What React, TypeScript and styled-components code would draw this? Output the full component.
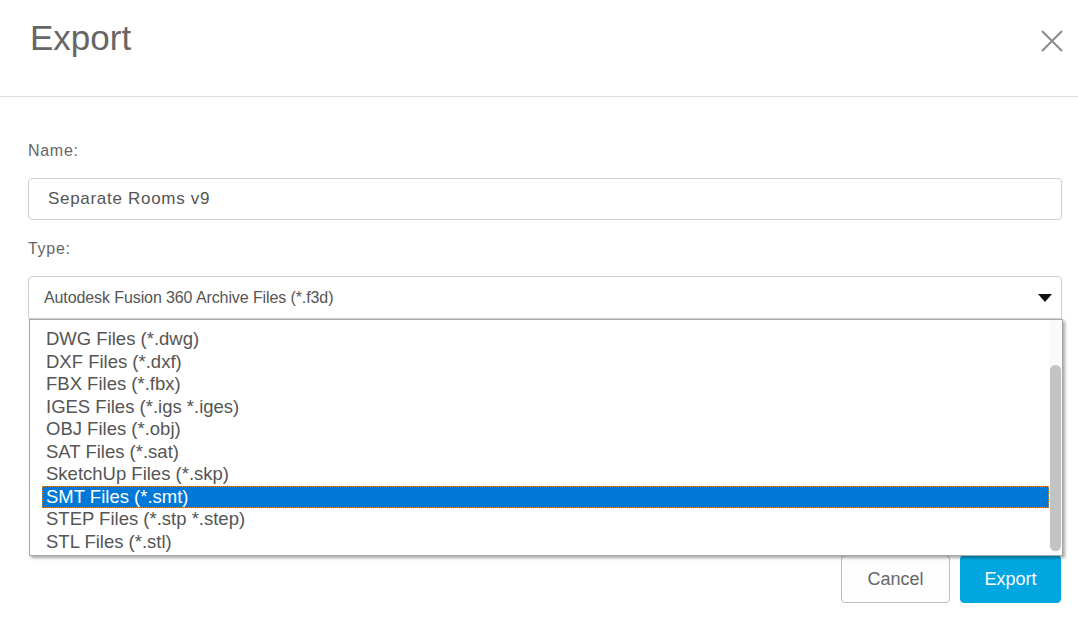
import styled, { createGlobalStyle } from 'styled-components';

const GlobalStyle = createGlobalStyle`
  html, body {
    margin: 0;
    background: #fff;
    font-family: 'Liberation Sans', Arial, sans-serif;
  }
  * {
    box-sizing: border-box;
  }
`;

const Dialog = styled.div`
  width: 1078px;
  height: 624px;
  background: #fff;
  overflow: hidden;
`;

const Header = styled.header`
  display: flex;
  justify-content: space-between;
  align-items: flex-start;
  height: 97px;
  padding: 20px 15px 0 30px;
  border-bottom: 1px solid #dcdcdc;
`;

const Title = styled.h1`
  margin: 0;
  font-size: 35px;
  line-height: 36px;
  font-weight: 400;
  color: #666;
`;

const Close = styled.button`
  display: flex;
  margin-top: 10px;
  padding: 0;
  border: 0;
  background: none;
  color: #8a8a8a;
  cursor: pointer;
`;

const Body = styled.div`
  display: flex;
  flex-direction: column;
  padding: 44px 16px 0 28px;
`;

const Label = styled.label`
  font-size: 16px;
  line-height: 20px;
  color: #666;
  letter-spacing: 0.7px;
  margin-bottom: 17px;
`;

const TextInput = styled.input`
  height: 42px;
  width: 100%;
  padding: 0 0 0 19px;
  border: 1px solid #cfcfcf;
  border-radius: 4px;
  font-family: inherit;
  font-size: 17px;
  letter-spacing: 0.7px;
  color: #555;
  outline: none;
  margin-bottom: 19px;
`;

const SelectWrap = styled.div`
  position: relative;
`;

const SelectBox = styled.div`
  display: flex;
  align-items: center;
  justify-content: space-between;
  height: 43px;
  padding: 0 9px 0 15px;
  border: 1px solid #cfcfcf;
  border-radius: 4px 4px 0 0;
  font-size: 16px;
  letter-spacing: -0.1px;
  color: #555;
`;

const Caret = styled.span`
  width: 0;
  height: 0;
  border-left: 7px solid transparent;
  border-right: 7px solid transparent;
  border-top: 8px solid #111;
  margin-top: 1px;
`;

const Dropdown = styled.div`
  position: absolute;
  top: 100%;
  left: 1px;
  right: -1px;
  height: 237px;
  display: flex;
  background: #fff;
  border: 1px solid #a9a9a9;
  box-shadow: 2px 2px 3px rgba(0, 0, 0, 0.35);
  z-index: 2;
`;

const Options = styled.ul`
  flex: 1;
  margin: 0;
  padding: 8px 0 0 12px;
  list-style: none;
`;

const Option = styled.li<{ $selected?: boolean }>`
  height: 22.5px;
  line-height: 22.5px;
  padding-left: 4px;
  font-size: 18.5px;
  color: ${({ $selected }) => ($selected ? '#fff' : '#555')};
  background: ${({ $selected }) => ($selected ? '#0078d7' : 'transparent')};
  outline: ${({ $selected }) => ($selected ? '1px dotted #e8892c' : 'none')};
  outline-offset: -1px;
  white-space: nowrap;
`;

const Track = styled.div`
  width: 13px;
  padding: 45px 1px 4px 1px;
  background: #f9fafb;
`;

const Thumb = styled.div`
  height: 100%;
  border-radius: 6px;
  background: #c3c3c3;
`;

const Footer = styled.div`
  display: flex;
  justify-content: flex-end;
  gap: 10px;
  margin-top: 236px;
  padding-right: 1px;
`;

const Button = styled.button<{ $primary?: boolean }>`
  width: ${({ $primary }) => ($primary ? '101px' : '109px')};
  height: 48px;
  border-radius: 4px;
  border: 1px solid ${({ $primary }) => ($primary ? '#00a6e0' : '#bdbdbd')};
  background: ${({ $primary }) => ($primary ? '#00a6e0' : '#fdfdfd')};
  color: ${({ $primary }) => ($primary ? '#fff' : '#666')};
  font-family: inherit;
  font-size: 18px;
  cursor: pointer;
`;

const fileTypes = [
  'DWG Files (*.dwg)',
  'DXF Files (*.dxf)',
  'FBX Files (*.fbx)',
  'IGES Files (*.igs *.iges)',
  'OBJ Files (*.obj)',
  'SAT Files (*.sat)',
  'SketchUp Files (*.skp)',
  'SMT Files (*.smt)',
  'STEP Files (*.stp *.step)',
  'STL Files (*.stl)',
];

const App = () => {
  return (
    <>
      <GlobalStyle />
      <Dialog>
        <Header>
          <Title>Export</Title>
          <Close aria-label="Close">
            <svg width="22" height="22" viewBox="0 0 22 22">
              <path d="M1 1L21 21M21 1L1 21" stroke="currentColor" strokeWidth="2" />
            </svg>
          </Close>
        </Header>
        <Body>
          <Label>Name:</Label>
          <TextInput defaultValue="Separate Rooms v9" />
          <Label>Type:</Label>
          <SelectWrap>
            <SelectBox>
              <span>Autodesk Fusion 360 Archive Files (*.f3d)</span>
              <Caret />
            </SelectBox>
            <Dropdown>
              <Options>
                {fileTypes.map((type) => (
                  <Option key={type} $selected={type.startsWith('SMT')}>
                    {type}
                  </Option>
                ))}
              </Options>
              <Track>
                <Thumb />
              </Track>
            </Dropdown>
          </SelectWrap>
          <Footer>
            <Button>Cancel</Button>
            <Button $primary>Export</Button>
          </Footer>
        </Body>
      </Dialog>
    </>
  );
};

export default App;
